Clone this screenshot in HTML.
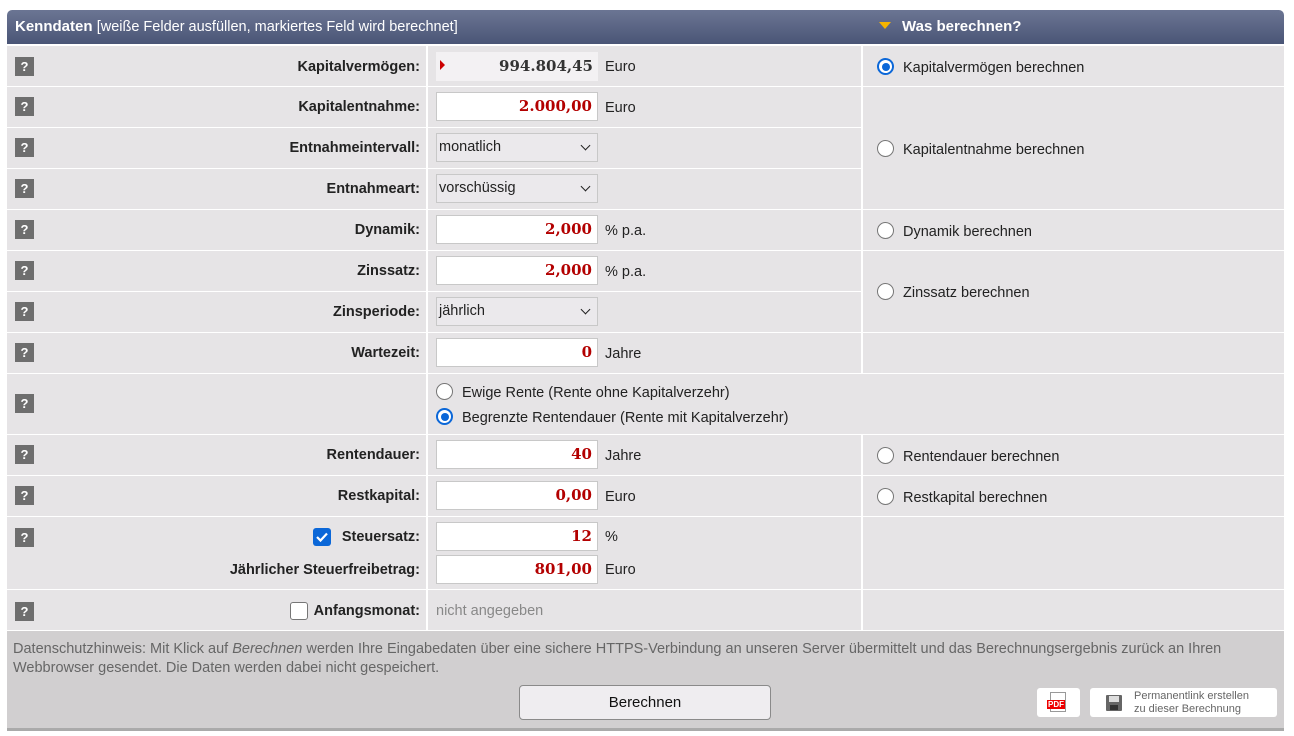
<!DOCTYPE html>
<html><head><meta charset="utf-8"><style>
*{box-sizing:border-box}
body{margin:0;width:1294px;height:736px;background:#fff;font-family:"Liberation Sans",Arial,sans-serif;font-size:14.5px;color:#222;position:relative;overflow:hidden}
.a{position:absolute}
.hdr{left:7px;top:10px;width:1277px;height:34px;background:linear-gradient(#6b7593,#4a5576);border-radius:5px 5px 0 0;color:#fff;font-size:15px}
.c{position:absolute;background:#e6e4e6}
.q{position:absolute;left:15px;width:19px;height:19px;background:#6e6e6e;color:#fff;font-weight:bold;font-size:13px;text-align:center;line-height:19px}
.lb{position:absolute;right:874px;font-weight:bold;text-align:right;white-space:nowrap}
.in{position:absolute;left:436px;width:162px;height:29px;background:#fff;border:1px solid #c8c8c8;text-align:right;padding-right:5px;font-family:"DejaVu Serif",serif;font-weight:bold;font-size:15px;color:#b30000;line-height:27px}
.sel{position:absolute;left:436px;width:162px;height:29px;background:#ebe9ec;border:1px solid #c8c8c8;padding-left:2px;line-height:27px}
.sel:after{content:"";position:absolute;right:8px;top:8px;width:6px;height:6px;border-right:1.7px solid #222;border-bottom:1.7px solid #222;transform:rotate(45deg)}
.u{position:absolute;left:605px}
.r{position:absolute;left:877px;width:17px;height:17px;border-radius:50%;border:1.5px solid #767676;background:#fff}
.r.on{border:2px solid #0b67d8}
.r.on:after{content:"";position:absolute;left:2.5px;top:2.5px;width:8px;height:8px;border-radius:50%;background:#0b67d8}
.rt{position:absolute;left:903px}
</style></head><body>
<div class="a hdr"><span class="a" style="left:8px;top:8px"><b>Kenndaten</b> <span style="font-size:14.5px">[weiße Felder ausfüllen, markiertes Feld wird berechnet]</span></span>
<span class="a" style="left:872px;top:12px;width:0;height:0;border-left:6px solid transparent;border-right:6px solid transparent;border-top:7px solid #f5b400"></span>
<b class="a" style="left:895px;top:8px">Was berechnen?</b></div>

<div class="c" style="left:7px;top:46px;width:419px;height:40px"></div><div class="c" style="left:428px;top:46px;width:433px;height:40px"></div><div class="c" style="left:863px;top:46px;width:421px;height:40px"></div>
<div class="c" style="left:7px;top:87px;width:419px;height:40px"></div><div class="c" style="left:428px;top:87px;width:433px;height:40px"></div>
<div class="c" style="left:7px;top:128px;width:419px;height:40px"></div><div class="c" style="left:428px;top:128px;width:433px;height:40px"></div>
<div class="c" style="left:7px;top:169px;width:419px;height:40px"></div><div class="c" style="left:428px;top:169px;width:433px;height:40px"></div>
<div class="c" style="left:863px;top:87px;width:421px;height:122px"></div>
<div class="c" style="left:7px;top:210px;width:419px;height:40px"></div><div class="c" style="left:428px;top:210px;width:433px;height:40px"></div><div class="c" style="left:863px;top:210px;width:421px;height:40px"></div>
<div class="c" style="left:7px;top:251px;width:419px;height:40px"></div><div class="c" style="left:428px;top:251px;width:433px;height:40px"></div>
<div class="c" style="left:7px;top:292px;width:419px;height:40px"></div><div class="c" style="left:428px;top:292px;width:433px;height:40px"></div>
<div class="c" style="left:863px;top:251px;width:421px;height:81px"></div>
<div class="c" style="left:7px;top:333px;width:419px;height:40px"></div><div class="c" style="left:428px;top:333px;width:433px;height:40px"></div><div class="c" style="left:863px;top:333px;width:421px;height:40px"></div>
<div class="c" style="left:7px;top:374px;width:419px;height:60px"></div><div class="c" style="left:428px;top:374px;width:856px;height:60px"></div>
<div class="c" style="left:7px;top:435px;width:419px;height:40px"></div><div class="c" style="left:428px;top:435px;width:433px;height:40px"></div><div class="c" style="left:863px;top:435px;width:421px;height:40px"></div>
<div class="c" style="left:7px;top:476px;width:419px;height:40px"></div><div class="c" style="left:428px;top:476px;width:433px;height:40px"></div><div class="c" style="left:863px;top:476px;width:421px;height:40px"></div>
<div class="c" style="left:7px;top:517px;width:419px;height:72px"></div><div class="c" style="left:428px;top:517px;width:433px;height:72px"></div><div class="c" style="left:863px;top:517px;width:421px;height:72px"></div>
<div class="c" style="left:7px;top:590px;width:419px;height:40px"></div><div class="c" style="left:428px;top:590px;width:433px;height:40px"></div><div class="c" style="left:863px;top:590px;width:421px;height:40px"></div>
<div class="a" style="left:7px;top:631px;width:1277px;height:97px;background:#d1cfd0"></div>
<div class="a" style="left:7px;top:728px;width:1277px;height:3px;background:#aaa"></div>

<div class="q" style="top:57px">?</div><b class="lb" style="top:59px">Kapitalvermögen:</b>
<div class="a" style="left:436px;top:52px;width:162px;height:29px;background:#f3f1f3"></div>
<span class="a" style="left:440px;top:60px;width:0;height:0;border-top:5px solid transparent;border-bottom:5px solid transparent;border-left:5px solid #c00"></span>
<span class="a" style="left:436px;top:52px;width:157px;text-align:right;font-family:'DejaVu Serif',serif;font-weight:bold;font-size:15px;line-height:29px;color:#333">994.804,45</span>
<span class="u" style="top:59px">Euro</span>
<div class="r on" style="top:58px"></div><span class="rt" style="top:60px">Kapitalvermögen berechnen</span>

<div class="q" style="top:97px">?</div><b class="lb" style="top:99px">Kapitalentnahme:</b><div class="in" style="top:92px">2.000,00</div><span class="u" style="top:100px">Euro</span>
<div class="q" style="top:138px">?</div><b class="lb" style="top:140px">Entnahmeintervall:</b><div class="sel" style="top:133px">monatlich</div>
<div class="q" style="top:179px">?</div><b class="lb" style="top:181px">Entnahmeart:</b><div class="sel" style="top:174px">vorschüssig</div>
<div class="r" style="top:140px"></div><span class="rt" style="top:142px">Kapitalentnahme berechnen</span>

<div class="q" style="top:220px">?</div><b class="lb" style="top:222px">Dynamik:</b><div class="in" style="top:215px">2,000</div><span class="u" style="top:223px">% p.a.</span>
<div class="r" style="top:222px"></div><span class="rt" style="top:224px">Dynamik berechnen</span>
<div class="q" style="top:261px">?</div><b class="lb" style="top:263px">Zinssatz:</b><div class="in" style="top:256px">2,000</div><span class="u" style="top:264px">% p.a.</span>
<div class="q" style="top:302px">?</div><b class="lb" style="top:304px">Zinsperiode:</b><div class="sel" style="top:297px">jährlich</div>
<div class="r" style="top:283px"></div><span class="rt" style="top:285px">Zinssatz berechnen</span>
<div class="q" style="top:343px">?</div><b class="lb" style="top:345px">Wartezeit:</b><div class="in" style="top:338px">0</div><span class="u" style="top:346px">Jahre</span>

<div class="q" style="top:394px">?</div>
<div class="r" style="left:436px;top:383px"></div><span class="a" style="left:462px;top:385px">Ewige Rente (Rente ohne Kapitalverzehr)</span>
<div class="r on" style="left:436px;top:408px"></div><span class="a" style="left:462px;top:410px">Begrenzte Rentendauer (Rente mit Kapitalverzehr)</span>

<div class="q" style="top:445px">?</div><b class="lb" style="top:447px">Rentendauer:</b><div class="in" style="top:440px">40</div><span class="u" style="top:448px">Jahre</span>
<div class="r" style="top:447px"></div><span class="rt" style="top:449px">Rentendauer berechnen</span>
<div class="q" style="top:486px">?</div><b class="lb" style="top:488px">Restkapital:</b><div class="in" style="top:481px">0,00</div><span class="u" style="top:489px">Euro</span>
<div class="r" style="top:488px"></div><span class="rt" style="top:490px">Restkapital berechnen</span>

<div class="q" style="top:528px">?</div>
<div class="a" style="left:313px;top:528px;width:18px;height:18px;border-radius:3px;background:#0b67d8"><svg width="18" height="18"><path d="M4 9l3.5 3.5L14 5.5" stroke="#fff" stroke-width="2.2" fill="none"/></svg></div>
<b class="lb" style="top:529px">Steuersatz:</b><div class="in" style="top:522px">12</div><span class="u" style="top:529px">%</span>
<b class="lb" style="top:562px">Jährlicher Steuerfreibetrag:</b><div class="in" style="top:555px">801,00</div><span class="u" style="top:562px">Euro</span>

<div class="q" style="top:602px">?</div>
<div class="a" style="left:290px;top:602px;width:18px;height:18px;border-radius:3px;background:#fff;border:1.5px solid #767676"></div>
<b class="lb" style="top:603px">Anfangsmonat:</b><span class="a" style="left:436px;top:603px;color:#888">nicht angegeben</span>

<div class="a" style="left:13px;top:640px;width:1225px;line-height:19px;color:#666">Datenschutzhinweis: Mit Klick auf <i>Berechnen</i> werden Ihre Eingabedaten über eine sichere HTTPS-Verbindung an unseren Server übermittelt und das Berechnungsergebnis zurück an Ihren Webbrowser gesendet. Die Daten werden dabei nicht gespeichert.</div>
<div class="a" style="left:519px;top:685px;width:252px;height:35px;background:#efedf0;border:1px solid #8a8a8a;border-radius:4px;text-align:center;line-height:33px;font-size:15px;color:#111">Berechnen</div>
<div class="a" style="left:1037px;top:688px;width:43px;height:29px;background:#fff;border-radius:3px"><div class="a" style="left:13px;top:4px;width:16px;height:20px;border:1px solid #999"></div><span class="a" style="left:10px;top:12px;background:#e00;color:#fff;font-size:8px;font-weight:bold;padding:0 1px">PDF</span></div>
<div class="a" style="left:1090px;top:688px;width:187px;height:29px;background:#fff;border-radius:3px">
<div class="a" style="left:16px;top:7px;width:16px;height:16px;background:#666;border-radius:1px"><div class="a" style="left:3px;top:1px;width:10px;height:6px;background:#ddd"></div><div class="a" style="left:4px;top:10px;width:8px;height:5px;background:#333"></div></div>
<span class="a" style="left:44px;top:2px;font-size:11px;line-height:13px;color:#666">Permanentlink erstellen<br>zu dieser Berechnung</span></div>
</body></html>
